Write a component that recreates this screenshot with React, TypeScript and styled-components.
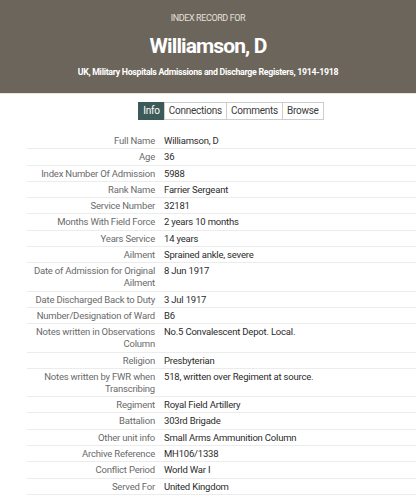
import React from "react";
import styled, { createGlobalStyle } from "styled-components";

const Global = createGlobalStyle`
  html, body { margin: 0; padding: 0; background: #fff; }
  body { font-family: Roboto, "Noto Sans", sans-serif; }
  * { box-sizing: border-box; }
`;

const Header = styled.header`
  background: #6c655b;
  height: 94px;
  border-bottom: 1px solid #e7e4db;
  display: flex;
  flex-direction: column;
  align-items: center;
  color: #fff;
  padding-top: 12px;
`;

const Kicker = styled.div`
  font-size: 9px;
  letter-spacing: -0.4px;
  color: #e4e0da;
  line-height: 12px;
`;

const Title = styled.h1`
  margin: 9px 0 0;
  font-size: 21px;
  letter-spacing: -0.9px;
  font-weight: 700;
  line-height: 26px;
`;

const Subtitle = styled.div`
  margin-top: 7px;
  font-size: 8.8px;
  letter-spacing: -0.3px;
  font-weight: 700;
  line-height: 12px;
`;

const Tabs = styled.nav`
  display: flex;
  justify-content: center;
  margin-top: 8px;
  padding-left: 47px;
`;

const Tab = styled.div<{ $active?: boolean }>`
  font-size: 10px;
  letter-spacing: -0.25px;
  line-height: 16px;
  height: 18px;
  padding: 0 4px;
  border: 1px solid ${(p) => (p.$active ? "#3c5a58" : "#c9cfcd")};
  margin-left: -1px;
  background: ${(p) => (p.$active ? "#3c5a58" : "#fff")};
  color: ${(p) => (p.$active ? "#fff" : "#3a3a3a")};
`;

const Table = styled.div`
  margin: 13px 0 0 27px;
  display: grid;
  grid-template-columns: 133px 1fr;
`;

const Row = styled.div`
  display: contents;
`;

const Cell = styled.div`
  font-size: 9.5px;
  letter-spacing: -0.2px;
  line-height: 12px;
  padding: 2px 0 1.3px;
  border-bottom: 1px solid #ececec;
`;

const Label = styled(Cell)`
  text-align: right;
  color: #6a6a6a;
  padding-right: 5px;
  padding-left: 0;
`;

const Value = styled(Cell)`
  color: #2b2b2b;
  padding-left: 4px;
`;

const rows: [string, string][] = [
  ["Full Name", "Williamson, D"],
  ["Age", "36"],
  ["Index Number Of Admission", "5988"],
  ["Rank Name", "Farrier Sergeant"],
  ["Service Number", "32181"],
  ["Months With Field Force", "2 years 10 months"],
  ["Years Service", "14 years"],
  ["Ailment", "Sprained ankle, severe"],
  ["Date of Admission for Original Ailment", "8 Jun 1917"],
  ["Date Discharged Back to Duty", "3 Jul 1917"],
  ["Number/Designation of Ward", "B6"],
  ["Notes written in Observations Column", "No.5 Convalescent Depot. Local."],
  ["Religion", "Presbyterian"],
  ["Notes written by FWR when Transcribing", "518, written over Regiment at source."],
  ["Regiment", "Royal Field Artillery"],
  ["Battalion", "303rd Brigade"],
  ["Other unit info", "Small Arms Ammunition Column"],
  ["Archive Reference", "MH106/1338"],
  ["Conflict Period", "World War I"],
  ["Served For", "United Kingdom"],
];

export default function App() {
  return (
    <>
      <Global />
      <Header>
        <Kicker>INDEX RECORD FOR</Kicker>
        <Title>Williamson, D</Title>
        <Subtitle>UK, Military Hospitals Admissions and Discharge Registers, 1914-1918</Subtitle>
      </Header>
      <Tabs>
        <Tab $active>Info</Tab>
        <Tab>Connections</Tab>
        <Tab>Comments</Tab>
        <Tab>Browse</Tab>
      </Tabs>
      <Table>
        {rows.map(([k, v]) => (
          <Row key={k}>
            <Label>{k}</Label>
            <Value>{v}</Value>
          </Row>
        ))}
      </Table>
    </>
  );
}
